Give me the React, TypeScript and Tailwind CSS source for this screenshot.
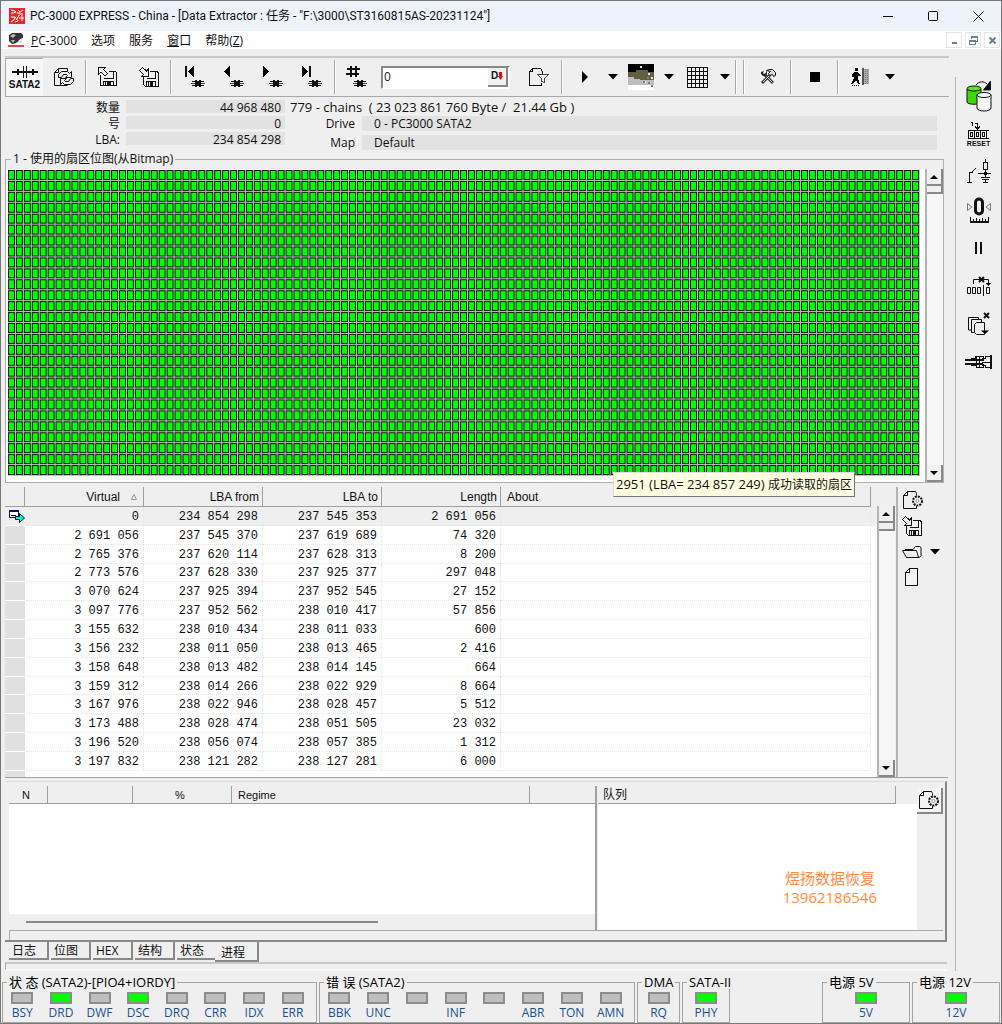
import React from 'react';

interface IconProps {
    w: number;
    h: number;
    smooth?: boolean;
    children: React.ReactNode;
}

interface TableRow {
    virtual: string;
    from: string;
    to: string;
    length: string;
}

interface Led {
    name: string;
    on?: boolean;
}

const Icon: React.FC<IconProps> = ({ w, h, smooth, children }) => (
    <svg
        width={w}
        height={h}
        viewBox={`0 0 ${w} ${h}`}
        fill="none"
        stroke="#111"
        strokeWidth="1"
        shapeRendering={smooth ? 'auto' : 'crispEdges'}
        className="block shrink-0"
        aria-hidden="true"
    >
        {children}
    </svg>
);

/* ---------- icons ---------- */

const AppIcon = () => (
    <Icon w={16} h={16} smooth>
        <path d="M0 0h16v16H0z" fill="#e8262a" stroke="none" />
        <path d="M2 2l4 1 1 2M2 5h3l2-2M9 2l2 2 3-2M8 5h3v2M13 5v8M10 10h5M2 9h4l-1 3-3 2M6 9l3 4-3 1M10 7l-2 4" stroke="#fff" />
    </Icon>
);

const ChildIcon = () => (
    <Icon w={16} h={16} smooth>
        <path d="M1 3l3-2h9l2 2v3l-3 1-3 4-5 1-3-3z" fill="#333" stroke="none" />
        <path d="M2 4l3-2 3 1-3 3zM3 8h4l-2 3z" fill="#bbb" stroke="none" />
        <path d="M9 10l5-2v3H8z" fill="#ddd" stroke="none" />
        <path d="M0 14h16" stroke="#e0474c" strokeWidth="2" />
    </Icon>
);

const Connector = () => (
    <Icon w={26} h={14}>
        <path d="M0 7h26" strokeWidth="2" />
        <path d="M5.500 4v6M20.500 4v6" strokeWidth="2" />
        <path d="M11.500 1v12M14.500 1v12" />
    </Icon>
);

const RefreshDocIcon = () => (
    <Icon w={22} h={20} smooth>
        <path d="M5.500 1.500h9v3M5.500 1.500l-4 4v13h13M5.500 1.500v4h-4" />
        <path d="M5.500 10.500v-3l3-3h6l2 2 2-2v6h-6l2-2-1-1h-3l-2 3z" fill="#eee" />
        <path d="M20.500 11.500v3l-3 3h-6l-2-2-2 2v-6h6l-2 2 1 1h3l2-3z" fill="#eee" />
    </Icon>
);

const SaveOutIcon = () => (
    <Icon w={20} h={20}>
        <path d="M2.500 8v10.500h16v-13l-1-1.500H11" />
        <path d="M5.500 11.500h10V4M5.500 18v-4h10v4M7.500 14.500v4" />
        <path d="M9 15h4v4H9z" fill="#111" stroke="none" />
        <path d="M.5.500h7l-2 2 4 4-2.500 2.500-4-4-2.500 2z" fill="#eee" />
    </Icon>
);

const SaveInIcon = () => (
    <Icon w={20} h={20}>
        <path d="M4.500 9v8.500l1.500 1.500h13V5.500l-1-1.500H11" />
        <path d="M7.500 11.500h9V4M7.500 19v-4.500h9V19M9.500 15v4" />
        <path d="M11 15h3v4h-3z" fill="#111" stroke="none" />
        <path d="M3.500.5l4 3.500 1.500-1.500v6.500H3l1.500-1.500-4-4z" fill="#eee" />
    </Icon>
);

const HeadParts = () => (
    <>
        <path d="M8 15.500h12M8 19.500h12" />
        <path d="M7 17.500h14" stroke="#444" />
        <path d="M11 14h2v7h-2zM15 14h2v7h-2z" fill="#111" stroke="none" />
        <path d="M12 16h4v3h-4z" fill="#111" stroke="none" />
    </>
);

const FirstIcon = () => (
    <Icon w={22} h={22}>
        <path d="M2 0v11" strokeWidth="2" />
        <path d="M10 0v11L4 5.500z" fill="#000" stroke="none" />
        <HeadParts />
    </Icon>
);
const PrevIcon = () => (
    <Icon w={22} h={22}>
        <path d="M7 0v11L1 5.500z" fill="#000" stroke="none" />
        <HeadParts />
    </Icon>
);
const NextIcon = () => (
    <Icon w={22} h={22}>
        <path d="M1 0v11l6-5.500z" fill="#000" stroke="none" />
        <HeadParts />
    </Icon>
);
const LastIcon = () => (
    <Icon w={22} h={22}>
        <path d="M1 0v11l6-5.500z" fill="#000" stroke="none" />
        <path d="M9 0v11" strokeWidth="2" />
        <HeadParts />
    </Icon>
);
const HashIcon = () => (
    <Icon w={22} h={22}>
        <path d="M5 0v11M10 0v11M1 3h13M0 8h13" strokeWidth="2" />
        <HeadParts />
    </Icon>
);

const FilterIcon = () => (
    <Icon w={22} h={20}>
        <path d="M4.500 1.500h8l2 3v3M4.500 1.500l-3 3v14h12v-3M4.500 1.500v3h-3" />
        <path d="M9.500 7.500h11l-4 4v4l-3-1v-3z" fill="#eee" stroke="#444" />
    </Icon>
);

const DropArrow = () => (
    <svg width="10" height="6" viewBox="0 0 10 6" className="block" aria-hidden="true">
        <path d="M0 0h10L5 5.500z" fill="#000" />
    </svg>
);

const TerrainIcon = () => (
    <Icon w={26} h={26}>
        <g stroke="none">
            <path d="M0 0h26v26H0z" fill="#fff" />
            <path d="M0 0h26v8H0z" fill="#000" />
            <path d="M0 8h8V6h12v2h6v8H0z" fill="#625f41" />
            <path d="M0 13h6v2h8v1h12v5H0z" fill="#bdbdbd" />
            <path d="M8 11h12v5H12v-2H8z" fill="#625f41" />
            <path d="M12 2h2v2h-2zM20 9h2v2h-2zM23 13h2v2h-2zM16 17h2v2h-2z" fill="#e6e6e0" />
            <path d="M15 17h2v2h-2zM20 18h2v2h-2zM23 21h2v2h-2zM19 13h2v2h-2z" fill="#827f60" />
        </g>
    </Icon>
);

const GridIcon = () => (
    <Icon w={21} h={21}>
        <path d="M.5.500h20v20H.5zM4.500 0v21M8.500 0v21M12.500 0v21M16.500 0v21M0 4.500h21M0 8.500h21M0 12.500h21M0 16.500h21" />
    </Icon>
);

const ToolsIcon = () => (
    <Icon w={16} h={16} smooth>
        <path d="M2 14l8-8M13 14L5 6" stroke="#333" strokeWidth="3" />
        <path d="M3 13l7-7M12.500 13.500l-6-6" stroke="#ddd" />
        <path d="M1 3v2l2 2h2l2-2V3L6 2v2L4 5 3 4l1-2z" fill="#222" stroke="none" />
        <path d="M6.500 1.500l3-1h3l3 3v3l-2 1-1-2-3 1-1-2 2-2z" fill="#ddd" />
    </Icon>
);

const ExitIcon = () => (
    <Icon w={19} h={18}>
        <g stroke="none">
            <path d="M4 0h3v3H4z" fill="#000" />
            <path d="M3 4h4l1 2 2 1v1H7v3l2 5H7l-2-4-3 4H0l3-6V8L2 9H1V7z" fill="#000" />
            <path d="M11 1h7v15h-7z" fill="#aaa" />
        </g>
        <path d="M12 0v17" strokeWidth="2" stroke="#555" />
        <path d="M14.500 1v15M16.500 1v15" stroke="#777" strokeDasharray="1 1" />
        <path d="M1 17.500h8" strokeDasharray="1 1" />
    </Icon>
);

const DisksIcon = () => (
    <Icon w={26} h={31} smooth>
        <path d="M10 4c3-4 8-4 11-1" />
        <path d="M24.500 0v9h-7z" fill="#000" />
        <path d="M1 8v13c0 3 14 3 14 0V8z" fill="#40d80c" />
        <ellipse cx="8" cy="7.500" rx="7" ry="2.500" fill="#58e824" />
        <path d="M11 14v13c0 4 14 4 14 0V14z" fill="#f8f8f8" />
        <ellipse cx="18" cy="14" rx="7" ry="2.500" fill="#f8f8f8" />
    </Icon>
);

const ResetIcon = () => (
    <Icon w={22} h={18}>
        <path d="M3 1.500h1.500V5M7 2.500h2.500V8M7 5.500l2.500 2.500L12 5.500" />
        <path d="M21 9.500H.5v8H21" />
        <path d="M2.500 11.500h2v4h-2zM8.500 11.500h2v4h-2zM14.500 11.500h2v4h-2zM6.500 9.500v8M12.500 9.500v8M18.500 9.500v8" />
    </Icon>
);

const CircuitIcon = () => (
    <Icon w={24} h={26}>
        <path d="M0 23.500h5M2.500 23V13h3M5 13L9 9" />
        <path d="M11 14.500h13M18.500 0v3M16.500 3.500h4v7h-4zM18.500 10v8M14 18.500h9M15 20.500h7M18.500 20v3M16 23.500h5" />
        <path d="M17 13h3v3h-3z" fill="#000" stroke="none" />
    </Icon>
);

const ZeroIcon = () => (
    <Icon w={26} h={26} smooth>
        <path d="M1.500 6.500v7L6 10zM24.500 6.500v7L20 10z" stroke="#777" />
        <rect x="9.500" y="2" width="7" height="15" rx="3.500" strokeWidth="3" />
        <path d="M4 25h19" strokeWidth="2" />
        <path d="M4.500 20v5M7.500 22v3M10.500 21v4M13.500 22v3M16.500 21v4M19.500 22v3M22.500 20v5" />
    </Icon>
);

const PauseIcon = () => (
    <Icon w={8} h={12}>
        <path d="M1 0v12M6 0v12" strokeWidth="2" />
    </Icon>
);

const SkipIcon = () => (
    <Icon w={24} h={20} smooth>
        <path d="M6.500 8V3.500h15V9" />
        <path d="M18.500 7h5.500l-2.500 3z" fill="#000" stroke="none" />
        <path d="M12 1l5 5M17 1l-5 5" strokeWidth="2" />
        <path d="M.5 11.500h3v6h-3zM5.500 11.500h3v6h-3zM10.500 11.500h3v6h-3zM19.500 11.500h3v6h-3zM16.500 9v11" />
    </Icon>
);

const CopiesIcon = () => (
    <Icon w={24} h={24} smooth>
        <path d="M4 18H1.500V5.500h10V7M7 20.500H4.500v-13h10V10" />
        <path d="M9.500 10.500h8v12h-8l-2-2v-8z" />
        <path d="M17 1l5 5M22 1l-5 5" strokeWidth="2" />
        <path d="M14 18.500h8l-4 3.500z" fill="#000" stroke="none" />
    </Icon>
);

const PlugIcon = () => (
    <Icon w={28} h={14}>
        <path d="M0 5h18M0 9h18" strokeWidth="2" />
        <path d="M6 3.500h4v-2h8v4M6 10.500h5v2h7v-4M11.500 1v12M14.500 1v12" />
        <path d="M17 3.500h3v-2h6M17 7.500h8M17 10.500h3v2h6" />
        <path d="M26 0v14" strokeWidth="2" />
    </Icon>
);

const GearDocIcon = () => (
    <Icon w={22} h={20} smooth>
        <path d="M5.500 1.500h8l1 2v2M5.500 1.500l-4 4v13h13v-3M5.500 1.500v4h-4" />
        <circle cx="15.500" cy="11" r="4.500" fill="#eee" strokeWidth="2" strokeDasharray="2 1" />
        <circle cx="15.500" cy="11" r="1.500" stroke="#999" fill="#fff" />
    </Icon>
);

const FolderIcon = () => (
    <Icon w={20} h={14} smooth>
        <path d="M4.500 12.500h13l1.500-2v-8l-1.500-1h-4l-2.500 3h-8M.500 5.500h14l2 7H4.500z" fill="#f4f4f4" />
    </Icon>
);

const BlankDocIcon = () => (
    <Icon w={14} h={19}>
        <path d="M4.500.500h8v17H.500v-13zM4.500.500v4H.500" fill="#f4f4f4" />
    </Icon>
);

const RowMarker = () => (
    <Icon w={17} h={13} smooth>
        <path d="M.5 1.500h9v6h-9z" fill="#fff" stroke="#00106c" />
        <path d="M0 1h10" stroke="#00106c" strokeWidth="2" />
        <path d="M2 5.500h5" />
        <path d="M6.500 6.500h4v-3l5 4.500-5 4.500V9.500h-4z" fill="#00f0f0" />
    </Icon>
);

/* ---------- data ---------- */

const rows: TableRow[] = [
    { virtual: '0', from: '234 854 298', to: '237 545 353', length: '2 691 056' },
    { virtual: '2 691 056', from: '237 545 370', to: '237 619 689', length: '74 320' },
    { virtual: '2 765 376', from: '237 620 114', to: '237 628 313', length: '8 200' },
    { virtual: '2 773 576', from: '237 628 330', to: '237 925 377', length: '297 048' },
    { virtual: '3 070 624', from: '237 925 394', to: '237 952 545', length: '27 152' },
    { virtual: '3 097 776', from: '237 952 562', to: '238 010 417', length: '57 856' },
    { virtual: '3 155 632', from: '238 010 434', to: '238 011 033', length: '600' },
    { virtual: '3 156 232', from: '238 011 050', to: '238 013 465', length: '2 416' },
    { virtual: '3 158 648', from: '238 013 482', to: '238 014 145', length: '664' },
    { virtual: '3 159 312', from: '238 014 266', to: '238 022 929', length: '8 664' },
    { virtual: '3 167 976', from: '238 022 946', to: '238 028 457', length: '5 512' },
    { virtual: '3 173 488', from: '238 028 474', to: '238 051 505', length: '23 032' },
    { virtual: '3 196 520', from: '238 056 074', to: '238 057 385', length: '1 312' },
    { virtual: '3 197 832', from: '238 121 282', to: '238 127 281', length: '6 000' },
];

const stateLeds: Led[] = [
    { name: 'BSY' }, { name: 'DRD', on: true }, { name: 'DWF' }, { name: 'DSC', on: true },
    { name: 'DRQ' }, { name: 'CRR' }, { name: 'IDX' }, { name: 'ERR' },
];

const errorLeds: Led[] = [
    { name: 'BBK' }, { name: 'UNC' }, { name: '' }, { name: 'INF' },
    { name: '' }, { name: 'ABR' }, { name: 'TON' }, { name: 'AMN' },
];

const tabs = ['日志', '位图', 'HEX', '结构', '状态', '进程'];

const sideTools = [
    { name: 'Copy disk', icon: <DisksIcon /> },
    { name: 'Reset counter', icon: <span className="flex flex-col items-center"><ResetIcon /><span className="font-['Liberation_Sans',sans-serif] text-[7px] font-bold leading-[9px]">RESET</span></span> },
    { name: 'Power', icon: <CircuitIcon /> },
    { name: 'Zero position', icon: <ZeroIcon /> },
    { name: 'Pause', icon: <PauseIcon /> },
    { name: 'Skip sectors', icon: <SkipIcon /> },
    { name: 'Clear copies', icon: <CopiesIcon /> },
    { name: 'Connector', icon: <PlugIcon /> },
];

/* ---------- parts ---------- */

const ToolButton: React.FC<{ label: string; className?: string; children: React.ReactNode }> = ({ label, className, children }) => (
    <button type="button" aria-label={label} className={`flex h-full shrink-0 items-center justify-center ${className ?? ''}`}>
        {children}
    </button>
);

const Separator = () => <div className="h-[34px] w-[2px] shrink-0 border-l border-[#a8a8a8] bg-white" />;

const ScrollBar = () => (
    <div className="flex w-[18px] shrink-0 flex-col border-l-2 border-[#b4b4b4] bg-[#f6f6f6]">
        <button type="button" aria-label="Scroll up" className="flex h-[17px] w-full items-center justify-center border-b-2 border-r-2 border-[#888] bg-[#f0f0f0]">
            <svg width="8" height="4" viewBox="0 0 8 4"><path d="M0 4h8L4 0z" /></svg>
        </button>
        <div className="h-[8px] border-b-2 border-r-2 border-[#888] bg-[#f0f0f0]" />
        <button type="button" aria-label="Scroll down" className="mt-auto flex h-[17px] w-full items-center justify-center border-b-2 border-r-2 border-[#888] bg-[#f0f0f0]">
            <svg width="8" height="4" viewBox="0 0 8 4"><path d="M0 0h8L4 4z" /></svg>
        </button>
    </div>
);

const LedGroup: React.FC<{ title: string; leds: Led[]; className: string; cols: string }> = ({ title, leds, className, cols }) => (
    <fieldset className={`min-w-0 shrink-0 border border-[#a4a4a4] ${className}`}>
        <legend className="ml-1 whitespace-nowrap px-[2px] text-[13px] leading-[14px] text-black">{title}</legend>
        <div className={`grid ${cols} pb-[1px] pt-[3px]`}>
            {leds.map((led, index) => (
                <div key={index} className="flex flex-col items-center">
                    <span className={`h-[12px] w-[22px] border-2 border-[#8c8c8c] ${led.on ? 'bg-[#00ff00]' : 'bg-[#bebebe]'}`} />
                    <span className="h-[17px] text-[12px] leading-[17px] text-[#1c4f8f]">{led.name}</span>
                </div>
            ))}
        </div>
    </fieldset>
);

const App: React.FC = () => {
    return (
        <div className="flex min-h-screen w-full flex-col border border-[#777] bg-[#efefef] font-['Open_Sans','Noto_Sans_CJK_SC',sans-serif] text-[12px] leading-4 text-[#111]">
            {/* Title bar */}
            <header className="flex h-[30px] items-center bg-[#eef3fa] pl-2">
                <AppIcon />
                <h1 className="ml-[5px] whitespace-nowrap font-['Roboto','Noto_Sans_CJK_SC',sans-serif] text-[12px]">PC-3000 EXPRESS - China - [Data Extractor : 任务 - "F:\3000\ST3160815AS-20231124"]</h1>
                <div className="ml-auto flex">
                    <button type="button" aria-label="Minimize" className="flex h-[30px] w-[45px] items-center justify-center">
                        <Icon w={11} h={11}><path d="M0 5.500h10" /></Icon>
                    </button>
                    <button type="button" aria-label="Maximize" className="flex h-[30px] w-[45px] items-center justify-center">
                        <Icon w={11} h={11} smooth><rect x=".5" y=".5" width="9" height="9" rx="1" /></Icon>
                    </button>
                    <button type="button" aria-label="Close" className="flex h-[30px] w-[45px] items-center justify-center">
                        <Icon w={11} h={11} smooth><path d="M.5.500l10 10M10.500.500l-10 10" /></Icon>
                    </button>
                </div>
            </header>

            {/* Menu */}
            <nav className="flex h-[18px] items-center bg-white pl-[7px]">
                <ChildIcon />
                <div className="ml-[7px] flex items-center gap-[14px] pt-[1px]">
                    <button type="button"><u>P</u>C-3000</button>
                    <button type="button">选项</button>
                    <button type="button">服务</button>
                    <button type="button"><u>窗</u>口</button>
                    <button type="button">帮助(<u>Z</u>)</button>
                </div>
                <div className="ml-auto flex gap-[3px] pr-[1px]">
                    <button type="button" aria-label="Minimize child" className="flex h-[16px] w-[16px] items-center justify-center border border-[#e6e6e6]">
                        <Icon w={9} h={9}><path d="M2 7h5" stroke="#6f7f90" strokeWidth="2" /></Icon>
                    </button>
                    <button type="button" aria-label="Restore child" className="flex h-[16px] w-[16px] items-center justify-center border border-[#e6e6e6]">
                        <Icon w={9} h={9}><path d="M2.500 3V1.500h6v4H7M.500 4.500h6v4h-6zM0 5.500h7M2 .500h7" stroke="#6f7f90" /></Icon>
                    </button>
                    <button type="button" aria-label="Close child" className="flex h-[16px] w-[16px] items-center justify-center border border-[#e6e6e6]">
                        <Icon w={9} h={9} smooth><path d="M1.500 1.500l6 6M7.500 1.500l-6 6" stroke="#6f7f90" strokeWidth="2" /></Icon>
                    </button>
                </div>
            </nav>

            <div className="flex">
                <main className="min-w-0 flex-1 pl-1 pt-[7px]">
                    {/* Toolbar */}
                    <div className="mr-[6px] flex h-[41px] items-center border-b border-t-2 border-b-[#a8a8a8] border-t-[#c8c8c8]">
                        <ToolButton label="SATA2" className="w-[38px] flex-col border-l border-t border-[#a8a8a8] bg-[#f6f6f6]">
                            <Connector />
                            <span className="font-['Liberation_Sans',sans-serif] text-[10px] font-bold leading-[11px]">SATA2</span>
                        </ToolButton>
                        <ToolButton label="Reload" className="w-[42px]"><RefreshDocIcon /></ToolButton>
                        <Separator />
                        <ToolButton label="Export" className="w-[41px]"><SaveOutIcon /></ToolButton>
                        <ToolButton label="Import" className="w-[42px]"><SaveInIcon /></ToolButton>
                        <Separator />
                        <div className="flex h-full px-[3px]">
                            <ToolButton label="First" className="w-[39px]"><FirstIcon /></ToolButton>
                            <ToolButton label="Previous" className="w-[39px]"><PrevIcon /></ToolButton>
                            <ToolButton label="Next" className="w-[39px]"><NextIcon /></ToolButton>
                            <ToolButton label="Last" className="w-[39px]"><LastIcon /></ToolButton>
                        </div>
                        <Separator />
                        <ToolButton label="Go to number" className="w-[42px]"><HashIcon /></ToolButton>
                        <div className="ml-[3px] flex h-[23px] w-[129px] shrink-0 border-2 border-b-white border-l-[#888] border-r-white border-t-[#888] bg-white">
                            <input aria-label="Sector" defaultValue="0" className="min-w-0 flex-1 px-[1px] text-[12px] text-[#222] outline-none" />
                            <button type="button" aria-label="Decimal" className="flex w-[20px] items-center justify-center border-b-2 border-r-2 border-[#888] bg-[#f0f0f0]">
                                <span className="font-['Liberation_Sans',sans-serif] text-[10px] font-bold leading-none">D</span>
                                <svg width="5" height="8" viewBox="0 0 5 8"><path d="M1 0h3v4h1L2.500 8 0 4h1z" fill="#f00" /></svg>
                            </button>
                        </div>
                        <ToolButton label="Filter" className="ml-2 mr-[1px] w-[42px]"><FilterIcon /></ToolButton>
                        <Separator />
                        <ToolButton label="Start" className="w-[44px]">
                            <svg width="6" height="12" viewBox="0 0 6 12"><path d="M0 0v12l6-6z" /></svg>
                        </ToolButton>
                        <ToolButton label="Start options" className="w-[12px]"><DropArrow /></ToolButton>
                        <ToolButton label="Map view" className="w-[44px]"><TerrainIcon /></ToolButton>
                        <ToolButton label="Map view options" className="w-[12px]"><DropArrow /></ToolButton>
                        <ToolButton label="Grid" className="w-[44px]"><GridIcon /></ToolButton>
                        <ToolButton label="Grid options" className="mr-1 w-[12px]"><DropArrow /></ToolButton>
                        <Separator />
                        <div className="w-[6px]" />
                        <Separator />
                        <ToolButton label="Settings" className="w-[45px]"><ToolsIcon /></ToolButton>
                        <Separator />
                        <ToolButton label="Stop" className="w-[45px]"><span className="h-[10px] w-[10px] bg-black" /></ToolButton>
                        <Separator />
                        <ToolButton label="Exit" className="w-[42px]"><ExitIcon /></ToolButton>
                        <ToolButton label="Exit options" className="w-[18px]"><DropArrow /></ToolButton>
                    </div>

                    {/* Summary */}
                    <div className="flex h-[55px] pt-[3px]">
                        <dl className="grid w-[280px] shrink-0 auto-rows-[16px] grid-cols-[115px_159px] gap-x-[6px]">
                            <dt className="text-right">数量</dt>
                            <dd className="h-[13px] bg-[#e2e2e2] pr-1 text-right leading-[16px]">44 968 480</dd>
                            <dt className="text-right">号</dt>
                            <dd className="h-[13px] bg-[#e2e2e2] pr-1 text-right leading-[16px]">0</dd>
                            <dt className="text-right">LBA:</dt>
                            <dd className="h-[13px] bg-[#e2e2e2] pr-1 text-right leading-[16px]">234 854 298</dd>
                        </dl>
                        <div className="min-w-0 flex-1 pl-[5px] pr-[18px]">
                            <p className="h-[16px] whitespace-pre text-[13px] leading-[15px]">779 - chains  ( 23 023 861 760 Byte /  21.44 Gb )</p>
                            <dl className="grid auto-rows-[15px] grid-cols-[65px_1fr] gap-x-[7px] gap-y-[4px]">
                                <dt className="text-right">Drive</dt>
                                <dd className="bg-[#e2e2e2] pl-3">0 - PC3000 SATA2</dd>
                                <dt className="text-right">Map</dt>
                                <dd className="bg-[#e2e2e2] pl-3">Default</dd>
                            </dl>
                        </div>
                    </div>

                    {/* Sector bitmap */}
                    <div className="relative mr-[11px]">
                        <fieldset className="min-w-0 border border-[#b0b0b0]">
                            <legend className="ml-[5px] px-[2px] leading-[14px]">1 - 使用的扇区位图(从Bitmap)</legend>
                            <div className="mt-[3px] flex">
                                <div className="min-w-0 flex-1 bg-white pb-[6px] pl-[2px] pr-[5px] pt-[1px]">
                                    <svg viewBox="0 0 920 308" preserveAspectRatio="none" className="block h-[306px] w-full" role="img" aria-label="Sector map">
                                        <defs>
                                            <pattern id="sector" width="8" height="11" patternUnits="userSpaceOnUse">
                                                <rect width="8" height="11" fill="#c4bcc4" />
                                                <rect width="7" height="10" fill="#062006" />
                                                <rect x="1" y="1" width="5" height="8" fill="#00ff00" />
                                            </pattern>
                                        </defs>
                                        <rect width="920" height="308" fill="url(#sector)" />
                                    </svg>
                                </div>
                                <ScrollBar />
                            </div>
                        </fieldset>
                        <div role="tooltip" className="absolute -bottom-[14px] right-[89px] whitespace-nowrap border border-b-[#777] border-l-[#ddd] border-r-[#777] border-t-[#ddd] bg-[#ffffe1] px-[2px] py-[3px] text-[13px]">
                            2951 (LBA= 234 857 249) <span className="text-[12px]">成功读取的扇区</span>
                        </div>
                    </div>

                    {/* Chains table */}
                    <div className="mr-[7px] mt-1 flex border-b border-[#a0a0a0]">
                        <div className="min-w-0 flex-1 bg-white">
                            <table className="h-[284px] w-full table-fixed border-separate border-spacing-0">
                                <colgroup>
                                    <col className="w-[20px]" />
                                    <col className="w-[119px]" />
                                    <col className="w-[119px]" />
                                    <col className="w-[119px]" />
                                    <col className="w-[119px]" />
                                    <col />
                                    <col className="w-[6px]" />
                                </colgroup>
                                <thead className="font-['Liberation_Sans',sans-serif] text-[12px]">
                                    <tr className="h-[20px] bg-[#efefef]">
                                        <th className="border-b border-r border-[#a0a0a0] p-0" />
                                        <th className="border-b border-r border-[#a0a0a0] p-0 pr-[6px] text-right font-normal">
                                            Virtual
                                            <svg width="6" height="6" viewBox="0 0 6 6" className="ml-[11px] inline-block" fill="none" stroke="#999"><path d="M.5 5.500h5L3 .500z" /></svg>
                                        </th>
                                        <th className="border-b border-r border-[#a0a0a0] p-0 pr-[3px] text-right font-normal">LBA from</th>
                                        <th className="border-b border-r border-[#a0a0a0] p-0 pr-[3px] text-right font-normal">LBA to</th>
                                        <th className="border-b border-r border-[#a0a0a0] p-0 pr-[3px] text-right font-normal">Length</th>
                                        <th className="border-b border-r border-[#a0a0a0] p-0 pl-[6px] text-left font-normal">About</th>
                                        <th className="p-0" />
                                    </tr>
                                </thead>
                                <tbody className="font-['Liberation_Mono',monospace] text-[12px] leading-[14px]">
                                    {rows.map((row, index) => (
                                        <tr key={row.virtual} className={`h-[18px] ${index === 0 ? 'bg-[#efefef]' : 'bg-white'}`}>
                                            <td className={`border-b border-white p-0 ${index === 0 ? 'bg-[#efefef]' : 'bg-[#e0e0e0]'}`}>
                                                {index === 0 && <div className="pl-1 pt-[2px]"><RowMarker /></div>}
                                            </td>
                                            <td className="border-b border-r border-dotted border-[#e6e6e6] p-0 pr-1 pt-[2px] text-right">{row.virtual}</td>
                                            <td className="border-b border-r border-dotted border-[#e6e6e6] p-0 pr-1 pt-[2px] text-right">{row.from}</td>
                                            <td className="border-b border-r border-dotted border-[#e6e6e6] p-0 pr-1 pt-[2px] text-right">{row.to}</td>
                                            <td className="border-b border-r border-dotted border-[#e6e6e6] p-0 pr-1 pt-[2px] text-right">{row.length}</td>
                                            <td className="border-b border-r border-dotted border-[#e6e6e6] p-0" />
                                            <td className="p-0" />
                                        </tr>
                                    ))}
                                </tbody>
                            </table>
                            <div className="h-[6px] w-[20px] bg-[#e0e0e0]" />
                        </div>
                        <div className="flex pt-[19px]"><ScrollBar /></div>
                        <div className="ml-[1px] flex w-[52px] shrink-0 flex-col gap-[6px] border-l-2 border-[#b4b4b4] pl-1 pt-[3px]">
                            <button type="button" aria-label="New chain" className="w-[22px]"><GearDocIcon /></button>
                            <button type="button" aria-label="Save chain" className="w-[20px]"><SaveInIcon /></button>
                            <div className="flex h-[20px] items-center gap-[8px]">
                                <button type="button" aria-label="Open"><FolderIcon /></button>
                                <button type="button" aria-label="Open options"><DropArrow /></button>
                            </div>
                            <button type="button" aria-label="Blank" className="w-[18px] pl-[3px]"><BlankDocIcon /></button>
                        </div>
                    </div>

                    {/* Processes and queue */}
                    <div className="mr-[8px] mt-[3px] flex flex-col border-b-2 border-r-2 border-t border-b-[#888] border-r-[#888] border-t-[#dcdcdc] pl-1 pr-[2px] pt-1">
                        <div className="flex h-[145px] border-b border-[#aaa]">
                            <section className="flex w-[588px] flex-col border-r-2 border-[#a0a0a0] bg-white">
                                <table className="w-full table-fixed border-separate border-spacing-0 bg-[#efefef] font-['Liberation_Sans',sans-serif] text-[11px]">
                                    <thead>
                                        <tr className="h-[18px]">
                                            <th className="w-[39px] border-b border-r border-[#a0a0a0] p-0 pr-1 font-normal">N</th>
                                            <th className="w-[85px] border-b border-r border-[#a0a0a0] p-0" />
                                            <th className="w-[99px] border-b border-r border-[#a0a0a0] p-0 pr-1 font-normal">%</th>
                                            <th className="border-b border-r border-[#a0a0a0] p-0 pl-[6px] text-left font-normal">Regime</th>
                                            <th className="w-[65px] border-b border-[#a0a0a0] p-0" />
                                        </tr>
                                    </thead>
                                </table>
                                <div className="mt-auto h-[16px] bg-[#efefef] pl-[17px] pt-[7px]">
                                    <div className="h-[2px] w-[352px] bg-[#888]" />
                                </div>
                            </section>
                            <section className="ml-[1px] min-w-0 flex-1 bg-white">
                                <div className="bg-[#efefef] pr-[21px]">
                                    <h2 className="h-[18px] border-b border-r border-[#a0a0a0] pl-[5px] text-[12px] leading-[18px]">队列</h2>
                                </div>
                                <p className="pr-[40px] pt-[65px] text-right text-[15px] leading-[19px] text-[#ff8a42]">
                                    <span className="block pr-[2px]">煜扬数据恢复</span>
                                    <span className="block">13962186546</span>
                                </p>
                            </section>
                            <div className="w-[26px] shrink-0 pt-[2px]">
                                <button type="button" aria-label="Add to queue" className="flex h-[26px] w-[26px] items-center justify-center border-b-2 border-r-2 border-[#888] bg-[#f4f4f4]">
                                    <GearDocIcon />
                                </button>
                            </div>
                        </div>
                        <div className="h-[9px] border-l border-[#aaa]" />
                    </div>

                    {/* Tabs */}
                    <div role="tablist" className="flex h-[20px] items-start gap-[2px] pl-1">
                        {tabs.map((tab, index) => (
                            <button
                                key={tab}
                                type="button"
                                role="tab"
                                aria-selected={index === 5}
                                className={`border-b-2 border-r-2 border-[#888] pl-[3px] pt-[1px] text-left text-[12px] ${index === 5 ? '-ml-1 h-[20px] w-[44px] bg-[#f0f0f0] pl-[6px] pt-[3px]' : 'h-[18px] w-[40px]'}`}
                            >
                                {tab}
                            </button>
                        ))}
                    </div>
                    <div className="mr-[8px] h-[9px] border-b-2 border-l border-t-2 border-b-[#f8f8f8] border-l-[#aaa] border-t-[#c8c8c8]" />
                </main>

                {/* Side tools */}
                <aside className="mt-[28px] flex w-[46px] shrink-0 flex-col border-l border-[#b4b4b4]">
                    {sideTools.map((tool) => (
                        <button key={tool.name} type="button" aria-label={tool.name} className="flex h-[38px] items-center justify-center">
                            {tool.icon}
                        </button>
                    ))}
                </aside>
            </div>

            {/* Drive registers */}
            <footer className="mt-[4px] flex gap-[2px] pl-[1px] pr-[1px]">
                <LedGroup title="状 态 (SATA2)-[PIO4+IORDY]" leds={stateLeds} className="w-[315px]" cols="grid-cols-8 pr-1" />
                <LedGroup title="错 误 (SATA2)" leds={errorLeds} className="w-[316px]" cols="grid-cols-8 pr-1" />
                <LedGroup title="DMA" leds={[{ name: 'RQ' }]} className="w-[43px]" cols="grid-cols-1" />
                <LedGroup title="SATA-II" leds={[{ name: 'PHY', on: true }]} className="w-[48px]" cols="grid-cols-1" />
                <div className="flex-1" />
                <LedGroup title="电源 5V" leds={[{ name: '5V', on: true }]} className="w-[88px]" cols="grid-cols-1" />
                <LedGroup title="电源 12V" leds={[{ name: '12V', on: true }]} className="w-[88px]" cols="grid-cols-1" />
            </footer>
        </div>
    );
};

export default App;
